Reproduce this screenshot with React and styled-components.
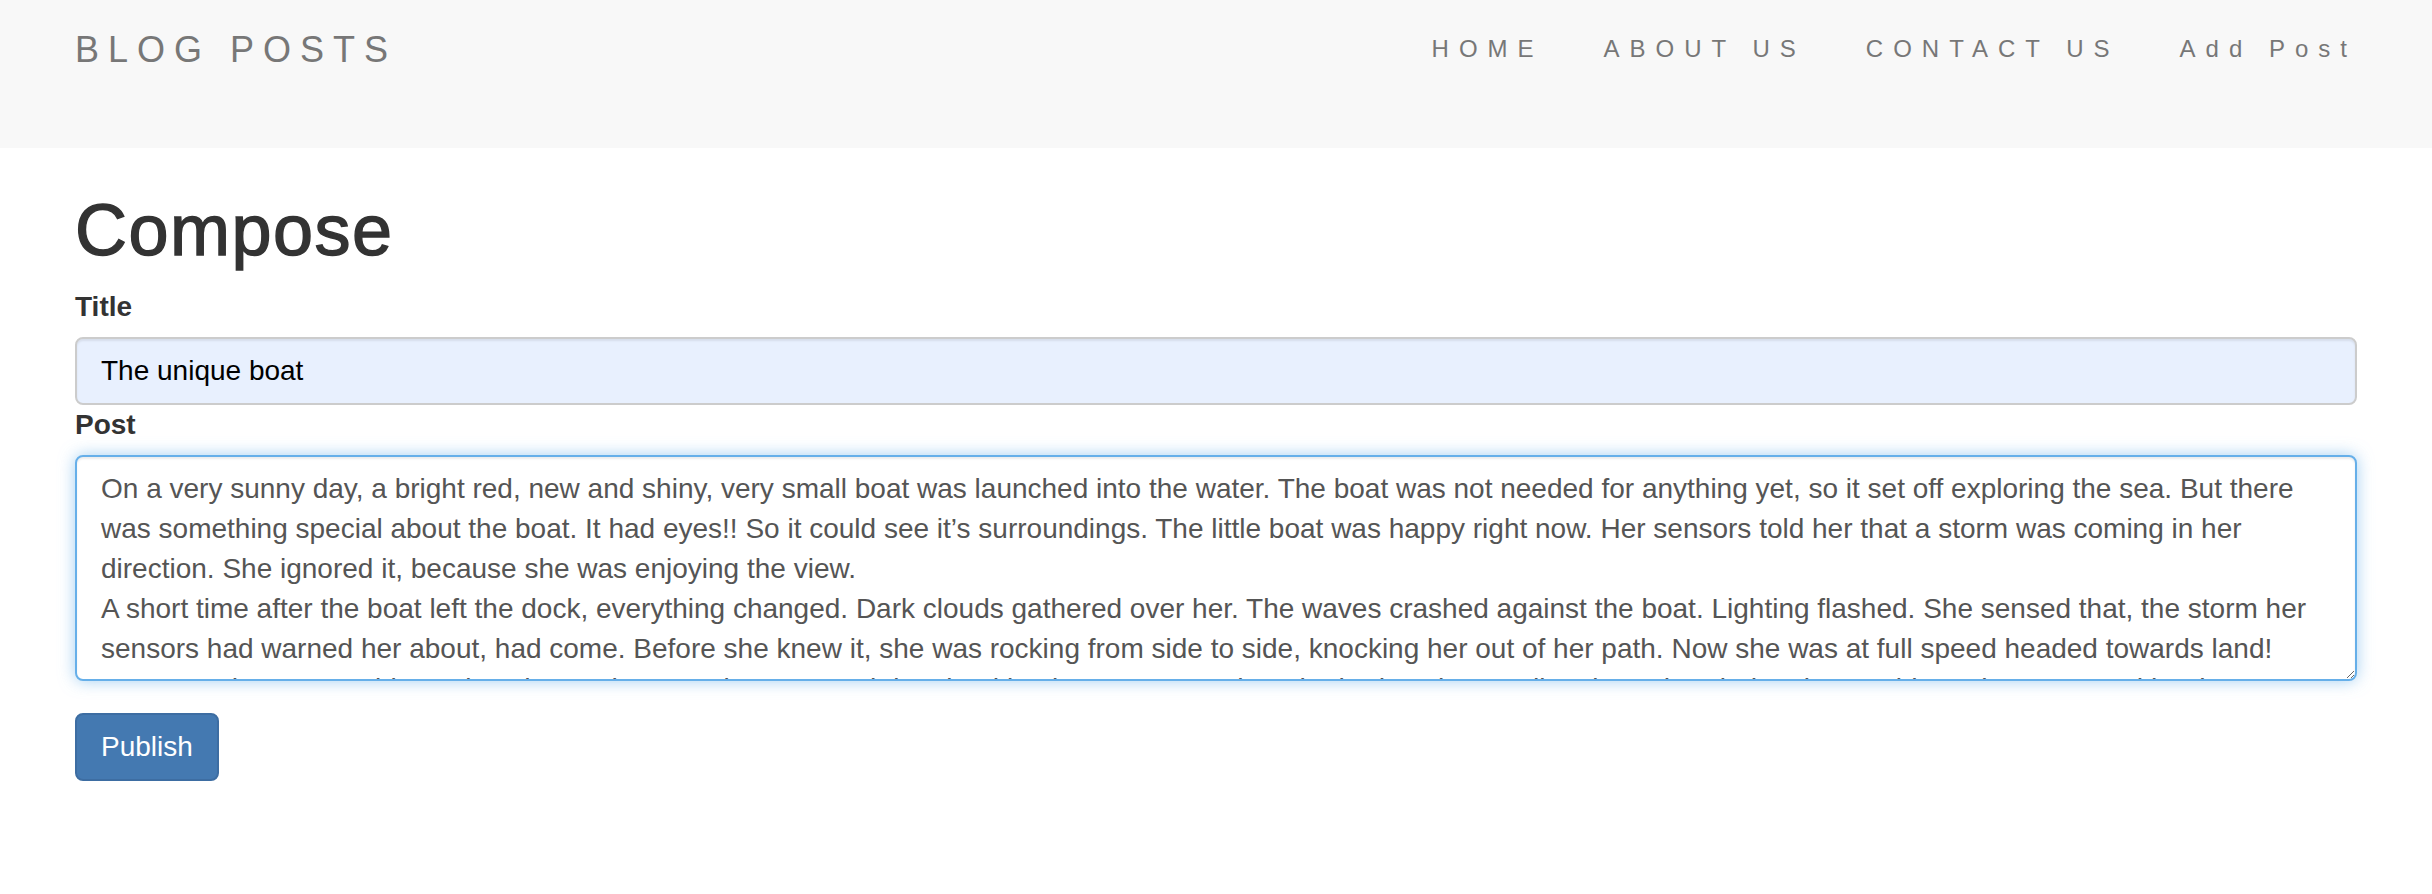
import React, { useState } from 'react';
import styled, { createGlobalStyle } from 'styled-components';

const GlobalStyle = createGlobalStyle`
  * { box-sizing: border-box; }
  body {
    margin: 0;
    background: #fff;
    font-family: "Liberation Sans", Arial, Helvetica, sans-serif;
    font-size: 28px;
    line-height: 40px;
    color: #333;
  }
`;

const Navbar = styled.nav`
  background: #f8f8f8;
  height: 148px;
`;

const Container = styled.div`
  width: 2340px;
  margin: 0 auto;
  padding: 0 29px;
`;

const NavInner = styled(Container)`
  display: flex;
  justify-content: space-between;
  align-items: flex-start;
`;

const Brand = styled.a`
  padding-top: 30px;
  font-size: 36px;
  line-height: 40px;
  letter-spacing: 9px;
  color: #777;
  text-decoration: none;
`;

const NavList = styled.ul`
  display: flex;
  list-style: none;
  margin: 0 -30px 0 0;
  padding: 0;
`;

const NavLink = styled.a`
  display: block;
  padding: 29px 30px 0;
  font-size: 24px;
  line-height: 40px;
  letter-spacing: 10px;
  color: #777;
  text-decoration: none;
`;

const Main = styled(Container)`
  padding-top: 43px;
`;

const Heading = styled.h1`
  margin: 0 0 17px;
  font-size: 72px;
  line-height: 79px;
  font-weight: 400;
  letter-spacing: 1.5px;
  -webkit-text-stroke: 1.4px #333;
  color: #333;
`;

const Label = styled.label`
  display: block;
  margin-bottom: 10px;
  font-weight: 700;
  font-size: 28px;
  line-height: 40px;
`;

const TextInput = styled.input`
  display: block;
  width: 100%;
  height: 68px;
  padding: 12px 24px;
  font: inherit;
  color: #000;
  background: #e8f0fe;
  border: 2px solid #ccc;
  border-radius: 8px;
  box-shadow: inset 0 2px 2px rgba(0, 0, 0, 0.075);
  outline: none;
`;

const TextArea = styled.textarea`
  display: block;
  width: 100%;
  height: 226px;
  padding: 12px 24px;
  font: inherit;
  color: #555;
  background: #fff;
  border: 2px solid #66afe9;
  border-radius: 8px;
  box-shadow: inset 0 2px 2px rgba(0, 0, 0, 0.075), 0 0 16px rgba(102, 175, 233, 0.6);
  outline: none;
  resize: vertical;
`;

const Button = styled.button`
  margin-top: 32px;
  padding: 12px 24px;
  font: inherit;
  color: #fff;
  background: #4479b1;
  border: 2px solid #3d6da2;
  border-radius: 8px;
  cursor: pointer;
`;

const links = ['HOME', 'ABOUT US', 'CONTACT US', 'Add Post'];

const story =
  'On a very sunny day, a bright red, new and shiny, very small boat was launched into the water. The boat was not needed for anything yet, so it set off exploring the sea. But there was something special about the boat. It had eyes!! So it could see it\u2019s surroundings. The little boat was happy right now. Her sensors told her that a storm was coming in her direction. She ignored it, because she was enjoying the view.\n' +
  'A short time after the boat left the dock, everything changed. Dark clouds gathered over her. The waves crashed against the boat. Lighting flashed. She sensed that, the storm her sensors had warned her about, had come. Before she knew it, she was rocking from side to side, knocking her out of her path. Now she was at full speed headed towards land!\n' +
  'Because she was unable to slow down, she was about to crash into land in about 20 seconds!! She had to change direction. She tried to, but couldn\u2019t. She screamed her heart out, but nobody heard her.';

export default function App() {
  const [title, setTitle] = useState('The unique boat');
  const [post, setPost] = useState(story);

  return (
    <>
      <GlobalStyle />
      <Navbar>
        <NavInner>
          <Brand href="#">BLOG POSTS</Brand>
          <NavList>
            {links.map((l) => (
              <li key={l}>
                <NavLink href="#">{l}</NavLink>
              </li>
            ))}
          </NavList>
        </NavInner>
      </Navbar>
      <Main>
        <Heading>Compose</Heading>
        <form onSubmit={(e) => e.preventDefault()}>
          <Label>Title</Label>
          <TextInput value={title} onChange={(e) => setTitle(e.target.value)} />
          <Label>Post</Label>
          <TextArea value={post} onChange={(e) => setPost(e.target.value)} />
          <Button type="submit">Publish</Button>
        </form>
      </Main>
    </>
  );
}
